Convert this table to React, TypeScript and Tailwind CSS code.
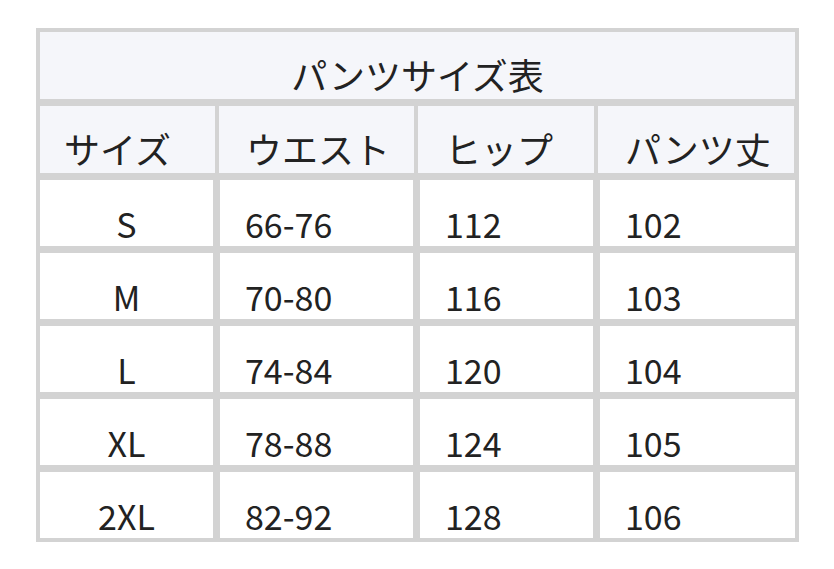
const rows = [
  ["S", "66-76", "112", "102"],
  ["M", "70-80", "116", "103"],
  ["L", "74-84", "120", "104"],
  ["XL", "78-88", "124", "105"],
  ["2XL", "82-92", "128", "106"],
];

const headers = ["サイズ", "ウエスト", "ヒップ", "パンツ丈"];

export default function App() {
  return (
    <div
      className="min-h-screen bg-white pl-[36px] pt-[28px] text-[#222] text-[34px] leading-[34px]"
      style={{ fontFamily: '"Noto Sans CJK JP", "Noto Sans", sans-serif' }}
    >
      <div className="w-[763px] bg-[#d3d3d3] p-[4px] flex flex-col gap-[7px]">
        {/* Title */}
        <div className="h-[67px] bg-[#f5f6fa] flex justify-center pt-[24px] text-[36px] leading-[36px]">
          パンツサイズ表
        </div>

        {/* Header row */}
        <div className="grid grid-cols-[175px_195px_176px_1fr] gap-[4px] pr-[1px]">
          {headers.map((h, i) => (
            <div
              key={h}
              className={`h-[67px] bg-[#f5f6fa] pt-[24px] text-[36px] leading-[36px] ${i === 0 ? "pl-[24px]" : "pl-[27px]"}`}
            >
              {h}
            </div>
          ))}
        </div>

        {/* Data rows */}
        {rows.map((r) => (
          <div key={r[0]} className="grid grid-cols-[173px_193px_173px_1fr] gap-[7px]">
            {r.map((c, i) => (
              <div
                key={i}
                className={`h-[66px] bg-white pt-[27px] ${i === 0 ? "text-center" : "pl-[25px]"}`}
              >
                {c}
              </div>
            ))}
          </div>
        ))}
      </div>
    </div>
  );
}
